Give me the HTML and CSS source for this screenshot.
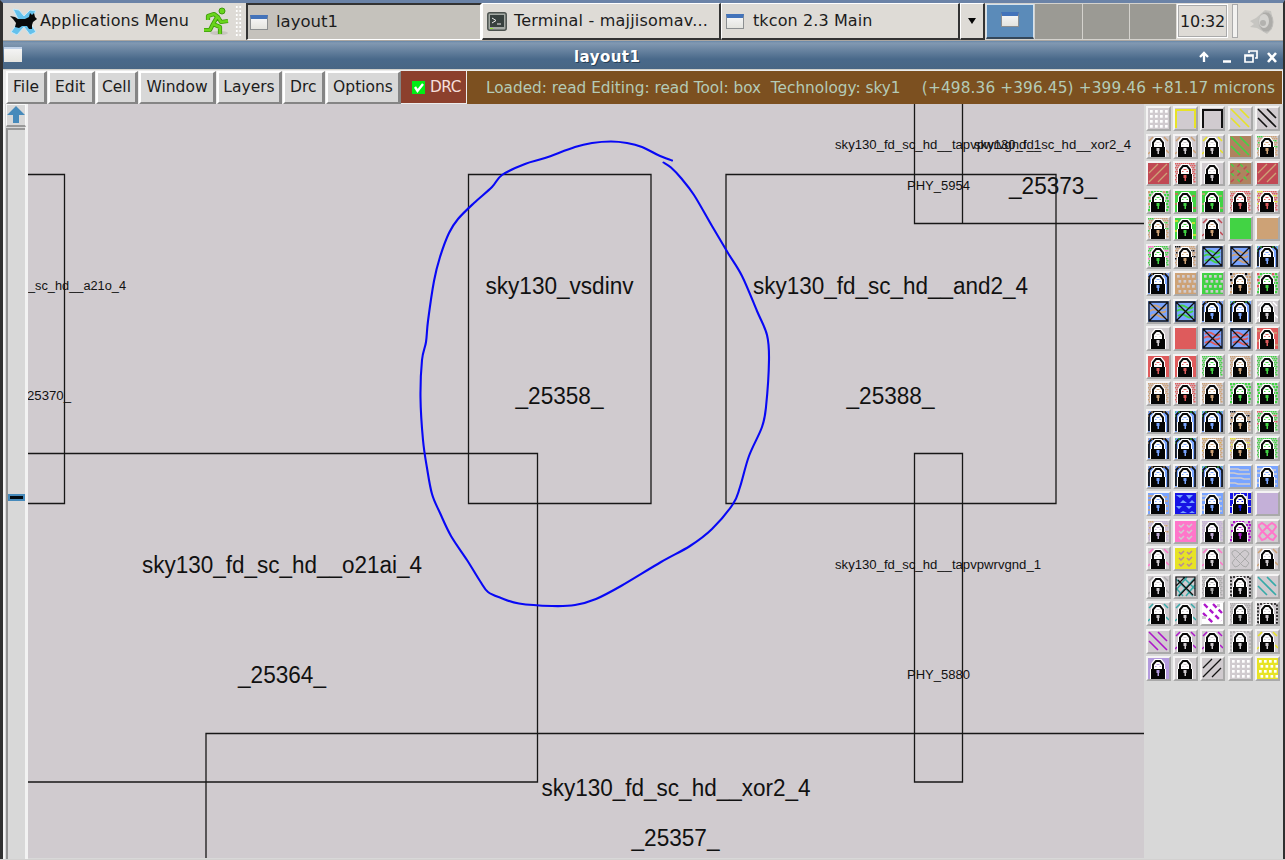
FILE: index.html
```
<!DOCTYPE html>
<html lang="en">
<head>
<meta charset="utf-8">
<title>layout1</title>
<link rel="stylesheet" href="styles.css">
</head>
<body>
<div class="desktop">
  <header class="taskbar">
    <div class="apps">
      <svg class="mouse" width="28" height="28" viewBox="0 0 28 28"><path d="M4 1l6 1 5 6 6-6 6 1-7 10 7 11-6 3-6-8-7 8-6-3 8-11z" fill="#64c1ec" stroke="#c6eafa"/><path d="M1 8l5 1 3 2h7l4-2 1-4 2 2 2-2 1 4 2 2-4 3-1 3v4h-3l-2-3h-5l-3 2-4-1 1-4-3-4z" fill="#080a0b"/></svg>
      <span>Applications Menu</span>
    </div>
    <svg class="runner" width="28" height="29" viewBox="0 0 28 29"><ellipse cx="17" cy="26" rx="9" ry="2" fill="#c7c5bf"/><g fill="none" stroke="#3e9a0c" stroke-width="4.2" stroke-linejoin="round"><path d="M6 13V9l6-2 4 3 3 5 7-1M15 10l-4 7 7 3v7M11 17l-3 6H2"/></g><g fill="none" stroke="#69d51c" stroke-width="2.5" stroke-linejoin="round"><path d="M6 13V9l6-2 4 3 3 5 7-1M15 10l-4 7 7 3v7M11 17l-3 6H2"/></g><circle cx="20" cy="4" r="3" fill="#69d51c" stroke="#3e9a0c"/></svg>
    <i class="grip"></i>
    <div class="task active"><i class="winicon"></i><span>layout1</span></div>
    <div class="task term"><svg width="20" height="19" viewBox="0 0 20 19"><rect x=".8" y=".8" width="18.4" height="17.4" rx="2" fill="#a5aaa5" stroke="#4c524f" stroke-width="1.5"/><rect x="3" y="3" width="14" height="12" fill="#38413f"/><path d="M5 6l4 2.5L5 11M10 12h4" stroke="#eee" fill="none"/><path d="M3 16.5h3" stroke="#8de02b"/></svg><span>Terminal - majjisomav...</span></div>
    <div class="task tk"><i class="winicon"></i><span>tkcon 2.3 Main</span></div>
    <div class="drop"><i></i></div>
    <div class="pager"><b><i class="winicon"></i></b><b></b><b></b><b></b></div>
    <div class="clock">10:32</div>
    <i class="sep"></i>
    <svg class="speaker" width="30" height="30" viewBox="0 0 30 30"><path d="M3 14l6-3 9-8 6 1 2 9-1 9-5 5-10-6-7-1 4-3z" fill="#c6c5c1"/><ellipse cx="19" cy="15" rx="7" ry="10" fill="#adaca9" stroke="#bdbcb9"/><ellipse cx="17" cy="14" rx="5" ry="7" fill="#d4d3d0"/><circle cx="16" cy="16" r="3" fill="#b3b2af"/></svg>
  </header>
  <div class="title">
    <i class="winicon"></i><strong>layout1</strong>
    <svg width="82" height="16" viewBox="0 0 82 16" fill="none" stroke="#fff" stroke-width="2.300"><path d="M8 13V4M4 8l4-4 4 4M27 12.500h8"/><path d="M53 4V2h8v7h-2M49 6h8v7h-8zM49 7h8" stroke-width="1.7"/><path d="M72 4l8 9M80 4l-8 9" stroke-width="2.6"/></svg>
  </div>
  <nav class="menu">
    <div class="btn file">File</div><div class="btn edit">Edit</div><div class="btn cell-menu">Cell</div><div class="btn window">Window</div><div class="btn layers">Layers</div><div class="btn drcmenu">Drc</div><div class="btn options">Options</div>
    <div class="drc"><svg width="13" height="13" viewBox="0 0 13 13"><path d="M0 0h13v13H0z" fill="#00ed14"/><path d="M3 6l2.500 4L11 3" fill="none" stroke="#fff" stroke-width="2.400"/></svg><span>DRC</span></div>
    <div class="status"><span class="loaded">Loaded: read Editing: read Tool: box&nbsp; Technology: sky1</span><span class="coords">(+498.36 +396.45) +399.46 +81.17 microns</span></div>
  </nav>
  <main class="work">
    <aside class="scroll"><div class="up"><svg width="20" height="20" viewBox="0 0 20 20"><path d="M10 1l9 9h-6v8H7v-8H1z" fill="#468abb"/></svg></div><div class="track"><i></i></div></aside>
    <svg class="canvas" width="1116" height="754" viewBox="28 104 1116 754">
      <g class="wires">
        <path d="M28 174.500H64.500V503.500H28M468.500 174.500H651V503.500H468.500zM726 174.500H1056V503.500H726zM28 453.500H537.500V782H28M206 858V733.500H1144M914.500 104V223.500H1144M962.500 104V223.500M914.500 453.500H962.500V782H914.500z"/>
      </g>
      <g class="big">
        <text x="485.5" y="294" textLength="148" lengthAdjust="spacingAndGlyphs">sky130_vsdinv</text>
        <text x="515.5" y="404" textLength="88" lengthAdjust="spacingAndGlyphs">_25358_</text>
        <text x="753" y="294" textLength="275" lengthAdjust="spacingAndGlyphs">sky130_fd_sc_hd__and2_4</text>
        <text x="846.5" y="404" textLength="88" lengthAdjust="spacingAndGlyphs">_25388_</text>
        <text x="1009" y="194" textLength="88" lengthAdjust="spacingAndGlyphs">_25373_</text>
        <text x="142" y="573" textLength="280" lengthAdjust="spacingAndGlyphs">sky130_fd_sc_hd__o21ai_4</text>
        <text x="238" y="683" textLength="88" lengthAdjust="spacingAndGlyphs">_25364_</text>
        <text x="541.5" y="796" textLength="269" lengthAdjust="spacingAndGlyphs">sky130_fd_sc_hd__xor2_4</text>
        <text x="631.5" y="846" textLength="88" lengthAdjust="spacingAndGlyphs">_25357_</text>
      </g>
      <g class="small">
        <text x="28" y="290" textLength="98" lengthAdjust="spacingAndGlyphs">_sc_hd__a21o_4</text>
        <text x="27" y="400" textLength="44" lengthAdjust="spacingAndGlyphs">25370_</text>
        <text x="835" y="149" textLength="206" lengthAdjust="spacingAndGlyphs">sky130_fd_sc_hd__tapvpwrvgnd_1</text>
        <text x="974" y="149" textLength="157" lengthAdjust="spacingAndGlyphs">sky130_fd_sc_hd__xor2_4</text>
        <text x="907" y="190" textLength="63" lengthAdjust="spacingAndGlyphs">PHY_5954</text>
        <text x="835" y="569" textLength="206" lengthAdjust="spacingAndGlyphs">sky130_fd_sc_hd__tapvpwrvgnd_1</text>
        <text x="907" y="679" textLength="63" lengthAdjust="spacingAndGlyphs">PHY_5880</text>
      </g>
      <path class="loop" d=""/>
    </svg>
    <aside class="palette"></aside>
  </main>
</div>
<script src="palette.js"></script>
</body>
</html>
```
FILE: styles.css
```
*{box-sizing:border-box}
body{margin:0;width:1285px;height:860px;overflow:hidden;background:#d2d1d0;font:16px "DejaVu Sans",sans-serif;color:#1c1c1c}
.desktop{height:859px;border-top:3px solid #6b83a7;border-left:3px solid #303030;border-right:2px solid #303030;display:flex;flex-direction:column;background:#d8d8d8}
span,strong{white-space:nowrap}
.taskbar{height:38px;flex:none;display:flex;background:#dedbd6;border-bottom:1px solid #aaa6a1}
.apps{display:flex;align-items:center;width:194px;flex:none;padding-left:6px;gap:3px}
.apps span{font-size:16px;margin-top:-2px;letter-spacing:.13px}
.mouse{flex:none}
.runner{margin:4px 0 0 5px;flex:none}
.grip{width:7px;flex:none;margin:2px 4px 2px 5px;background:radial-gradient(circle,#fff 1px,transparent 1.200px) 0 0/3.500px 4px}
.task{display:flex;align-items:center;border:1px solid #fff;border-right:2px solid #333;border-bottom:2px solid #333;height:37px;flex:none}
.task span{margin-top:-1px}
.active{width:236px;background:#c5c2bc;border:2px solid #333;border-bottom:1px solid #fff;border-right:2px solid #fff;padding-left:2px;gap:8px}
.task.active span{font-size:16.500px}
.winicon{display:block;width:18px;height:15px;background:linear-gradient(#f4f4f4,#e4e4df);border:1px solid #8c8f91;border-top:4px solid #4373ba;flex:none}
.term{width:239px;padding-left:4px;gap:7px}
.task.term span{font-size:16px;letter-spacing:.2px}
.tk{width:239px;padding-left:4px;gap:9px}
.task.tk span{font-size:16px;letter-spacing:.1px}
.drop{width:25px;flex:none;border:1px solid #fff;border-right:2px solid #333;border-bottom:2px solid #333;display:flex;align-items:center;justify-content:center}
.drop i{border:4px solid transparent;border-top:6px solid #050505;border-bottom:0}
.pager{display:flex;width:190px;flex:none;margin-left:1px;padding:1px 0;gap:1px;background:#d4d2cd}
.pager b{flex:1;background:#9b9a94;display:flex;justify-content:center;padding-top:7px}
.pager b:first-child{background:#5b8bb9;border:1px solid #d5e2ed;border-bottom:2px solid #34475a}
.clock{width:51px;flex:none;height:34px;margin:1px 0 0 1px;border:2px solid #fff;outline:1px solid #aaa;outline-offset:-2px;font-size:16px;line-height:31px;text-align:center;letter-spacing:-.2px}
.sep{width:6px;flex:none;margin:1px 0 2px 4px;border:1px solid #aaa;background:#f3f2f0}
.speaker{margin:4px 0 0 9px;flex:none}
.title{height:29px;flex:none;background:linear-gradient(#6787a8 0,#8299b2 7%,#49698a 65%,#486684);border-bottom:1px solid #d1d1cb;display:flex;align-items:center}
.title .winicon{width:18px;height:15px;border:0;border-top:2px solid #c0d1e8;margin:0 0 2px 1px}
.title strong{color:#fff;font-size:15px;letter-spacing:.45px;margin-left:552px;margin-top:3px;text-shadow:1px 1px #263f55}
.title svg{margin:3px 5px 0 auto}
.menu{height:34px;flex:none;display:flex;background:#ececec;padding:1px 1px 0 3px}
.btn{height:33px;border:2px solid #fff;border-right:3px solid #858585;border-bottom:2px solid #858585;background:#d8d8d8;font-size:15.500px;text-align:center;line-height:29px;margin-right:1px;white-space:nowrap;flex:none}
.file{width:41px}.edit{width:47px}.cell-menu{width:42px}.window{width:77px}.layers{width:65px}.drcmenu{width:42px}.options{width:75px;margin:0}
.btn.edit,.btn.drcmenu{text-align:left;padding-left:5px}
.drc{width:65px;flex:none;background:#8c402d;margin-bottom:1px;display:flex;align-items:center;gap:5px;padding-left:11px;color:#f5deda;font-size:15.300px}
.drc span{letter-spacing:-.5px}
.status{margin-left:1px;flex:1;background:#7c5020;color:#b4cbb7;display:flex;justify-content:space-between;align-items:center;padding:0 7px 0 19px;font-size:15.300px}
.coords{letter-spacing:.14px}
.work{display:flex;flex:1;min-height:0}
.scroll{width:25px;background:#d8d8d8;border-right:3px solid #f2f2f2;border-left:2px solid #f4f4f4;display:flex;flex-direction:column;flex:none}
.up{height:23px;width:20px;margin-left:1px;flex:none;border:1px solid #f8f8f8;border-bottom:2px solid #999;display:flex;justify-content:center;align-items:center}
.up svg{flex:none}
.track{flex:1;border-left:2px solid #929292;margin-top:1px;border-top:2px solid #999;margin-left:1px}
.track i{display:block;height:7px;margin-top:364px;background:#010b12;border:2px solid #468abb}
.canvas{display:block;background:#d0cbcf;flex:none}
.wires{fill:none;stroke:#171717;stroke-width:1.300}
.big,.small{font-family:"Liberation Sans",sans-serif;fill:#111}
.big{font-size:23px}.small{font-size:12px}
.loop{fill:none;stroke:#0808f5;stroke-width:2.100;stroke-linejoin:round;stroke-linecap:round}
.palette{flex:1;display:grid;grid-template-columns:repeat(5,25px);grid-auto-rows:25px;gap:2.500px 2.400px;padding:2px 0 0 1.500px;align-content:start}
.layer{border:2px solid #f4f3f3;border-right-color:#a9a9a9;border-bottom-color:#a9a9a9;background:#d0cbcf;display:flex}
.layer svg{display:block;width:21px;height:21px}
```
FILE: palette.js
```
const C = {g:'#42d344', t:'#cda276', b:'#79a4ff', r:'#de5b5c', c:'#c14854', y:'#e7e326', k:'#111', p:'#ff76ca', m:'#ad16c9', l:'#c4b0d8', v:'#b49bde', q:'#36aaa8', w:'#fff', s:'#aaa', n:'#af835f', d:'#1714e5', o:'#d7a94b', x:'#d0cbcf', i:'#b68a9a'};
// Each entry: optional L (lock), fill style, then primary and accent colours.
const rows = [
 'dots:xw box:xy box:xk down:xy down:xk',
 'Lslash:xt Lslash:xt Lslash:xy down:ng Lcheck:tg',
 'up:ct Lcheck:rr Lsolid:xx weave:nr up:ct',
 'Lnoise:gt Lsolid:gr Lsolid:gt Lcheck:rt Lcheck:ry',
 'Lcheck:tg Lsolid:gy Lslash:tc solid:gg solid:tt',
 'Lcheck:gp Lcheck:tk cross:bg cross:bt Lring:bg',
 'Lring:bt dots:tx dots:gx Lnoise:tk Lnoise:gr',
 'cross:bt cross:bg Lring:bt Lring:bg Lslash:xw',
 'Lsolid:xx solid:rr cross:br cross:br Lsolid:rt',
 'Lsolid:rr Lsolid:rr Lcheck:gg Lcheck:tt Lcheck:gg',
 'Lcheck:tt Lcheck:rr Lcheck:tt Lnoise:gg Lnoise:gg',
 'Lring:bt Lring:bg Lring:bg Lcheck:tk Lcheck:gr',
 'Lring:bt Lring:bg Lcheck:to Lcheck:ty Lcheck:gg',
 'Lring:bt Lring:bt Lring:bg waves:bx Lwaves:bx',
 'Lwaves:bt tri:db Lwaves:bx Ledge:dx solid:ll',
 'Lcheck:lt flecks:px Lcheck:ll Lnoise:mx lattice:xp',
 'Lslash:xp flecks:yi Lslash:xp lattice:xs Lslash:xt',
 'Lslash:xs teal:qk Lcheck:ss Lframe:xk down:xq',
 'Lslash:xq Lslash:xq dash:wm Lcheck:ss Lframe:xk',
 'down:xm Lslash:xm Lslash:xm Lframe:xs Lslash:xy',
 'Lsolid:vv Lsolid:xx up:xk dots:xw dots:yw'];
const rect = (x,y,w,h,f) => `<rect x="${x}" y="${y}" width="${w}" height="${h}" fill="${f}"/>`;
const line = (d,f,w=1.2,extra='') => `<path d="${d}" fill="none" stroke="${f}" stroke-width="${w}" ${extra}/>`;
const downPath = 'M1 10l9 9M1 1l18 18M10 1l9 9';
const upPath = 'M1 10L10 1M1 19L19 1M10 19l9-9';
function fill(kind,a,b,lock) {
 let s='';
 const base=['check','noise','slash','edge','frame','lattice'].includes(kind)?C.x:a;
 s += rect(0,0,21,21,base);
 if(kind==='dots') for(let y=2;y<20;y+=5) for(let x=2;x<20;x+=5) s+=rect(x+(a!==C.x&&y%2?1.5:0),y,2.7,2.7,b);
 if(kind==='box') s += line('M1 20V2h19v18',b,2);
 if(kind==='down') s += line(downPath,b,1.6);
 if(kind==='up') s += line(upPath,b,1.3);
 if(kind==='slash') s += line('M0 18l2-2M1 5l4-4M16 1l4 4M18 14l3 3',b,1.5);
 if(kind==='weave') s += line(downPath,C.g,1.4,'stroke-dasharray="4 5"')+line(upPath,C.c,1.4,'stroke-dasharray="4 5"');
 if(kind==='check'||kind==='noise') {
  const step=kind==='check'?2:3;
  for(let y=0;y<20;y+=step) for(let x=0;x<20;x+=step) {
   const n=(x*7+y*11)%13;
   s+=rect(x+(y/step%2),y,step*.75,step*.75,n<3?b:a);
  }
 }
 if(kind==='solid'&&a!==b&&lock) s+=line('M0 3h3M17 5h3M0 13h2M18 17h3',b,1.5);
 if(kind==='ring') s+=line('M1 20V4l3-3h13l3 3v17',C.k,1.8)+line('M0 6V1h5M15 1h5',b,1,'stroke-dasharray="2 2"')+line('M2.500 7v13M18.500 7v13',C.b,1.2);
 if(kind==='cross') s+=line('M3 6q4-3 8 0t7 0M2 10q4-3 8 0t8 0M3 15q4-3 8 0t7 0',b,1.8)+line('M1 1h19v19H1zM1 1l19 19M1 20L20 1',C.k,1.3);
 if(kind==='waves') s+=line('M0 3h8l2 1h9M0 7h4l4 1h12M0 12h11l3 1h6M0 17h5l3 1h12',b,1.5);
 if(kind==='tri') s+=`<path d="M1 2h7L5 5zM11 2h7l-4 4zM5 10l3-3 4 3zM14 10l3-3 3 3zM1 13h6l-3 3zM11 13h6l-3 3zM5 20l3-2 4 2zM14 20l3-2 3 2z" fill="${b}"/>`;
 if(kind==='edge') s+=line('M1.500 20V1.500h18v19',a,3,'stroke-dasharray="6 1"');
 if(kind==='frame') s+=line('M1 20V1h19v19H1',b,1.6,'stroke-dasharray="2 1.5"');
 if(kind==='flecks') for(let y=4;y<20;y+=6) s+=line(`M4 ${y}l2 2 3-3M12 ${y}l2 2 3-3`,b,1.5);
 if(kind==='lattice') s+=line('M2 4l3-2 3 2 8 8 3 3-3 4-3-1-8-8-3-4zM18 4l-3-2-3 2-8 8-2 3 3 4 3-1 8-8 3-4z',b,b===C.p?2:1);
 if(kind==='teal') s=rect(0,0,21,21,C.x)+line('M1 3l17 17M8 1l12 12M1 12l7 8M20 2L3 20M12 1L1 14M20 9l-9 11',a,1.5)+line('M1 20V1h19v19M1 10L10 1M4 20L20 3M3 4l15 15',b,1.2);
 if(kind==='dash') s+=line('M1 10l10 10M2 1l17 17M11 1l9 9',b,2.4,'stroke-dasharray="5 3"')+rect(0,13,4,3,C.x)+rect(15,1,3,3,C.x);
 return s;
}
// Padlock: white halo, black shackle and body, keyhole in the layer colour.
function lock(color) {
 return `<path d="M3 11V5.500L6.500 1h7L17 5.500V11h1v10H2V11z" fill="#fff"/><path d="M5 11V6.500L8 3h4l3 3.500V11" fill="none" stroke="#090909" stroke-width="2"/>${rect(8.500,6,3,1,color)}${rect(7,8,1.500,1,color)}${rect(11.500,8,1.500,1,color)}${rect(3,11,14,10,'#050505')}${rect(8.500,12,3,3,color)}${rect(9.500,14,1.500,4,color)}`;
}
document.querySelector('.palette').innerHTML = rows.join(' ').split(' ').map(item => {
 const locked=item[0]==='L';
 const [kind,colors]=(locked?item.slice(1):item).split(':');
 const a=C[colors[0]],b=C[colors[1]];
 return `<div class="layer"><svg viewBox="0 0 21 21">${fill(kind,a,b,locked)}${locked?lock(a):''}</svg></div>`;
}).join('');

// Freehand annotation, smoothed through its sampled points.
const pts = [[672,160.5],[658,155],[642,147],[627,143],[611,141.5],[592,143],[575,147],[545,158],[525,164],[502,175],[492,187],[474,203],[458,219],[449,233],[440,257],[434,281],[428,321],[426,342],[422,360],[420.5,398],[423,440],[427,468],[432,494],[440,513],[451,536],[467,560],[480,581],[488,592],[501,598],[519,603.5],[552,606],[575,605],[596,599],[621,586],[661,562],[690,546],[712,529],[733,504],[740,487],[749,456],[762,427],[766,407],[769,360],[767,335],[757,311],[742,276],[728,253],[712,226],[694,195],[681,178],[671,167.5],[663.5,162.5]];
let path = `M${pts[0]}`;
for(let i=0;i<pts.length-1;i++) {
 const p=pts[Math.max(0,i-1)],a=pts[i],b=pts[i+1],n=pts[Math.min(pts.length-1,i+2)];
 path += `C${a[0]+(b[0]-p[0])/6} ${a[1]+(b[1]-p[1])/6} ${b[0]-(n[0]-a[0])/6} ${b[1]-(n[1]-a[1])/6} ${b}`;
}
document.querySelector('.loop').setAttribute('d',path);
```
